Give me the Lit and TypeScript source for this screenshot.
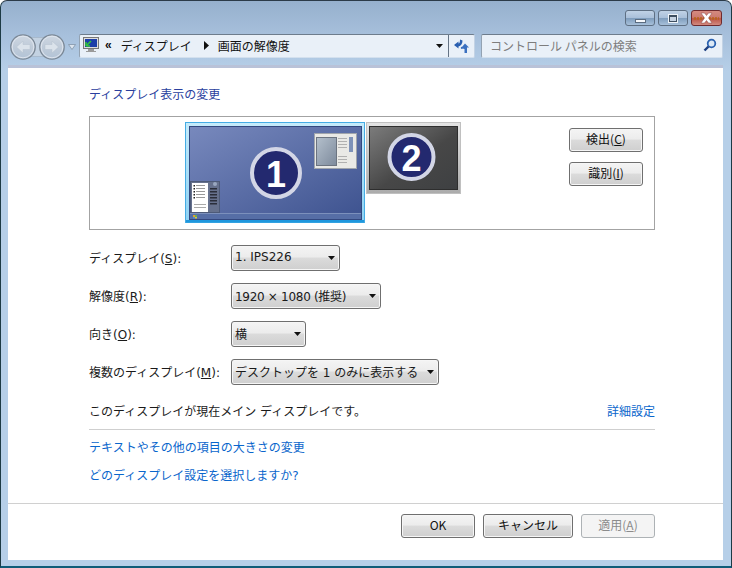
import { LitElement, html, css, svg } from "lit";
import { customElement } from "lit/decorators.js";

const arrow = html`<svg class="caret" width="7" height="4" viewBox="0 0 7 4"><path d="M0 0H7L3.5 4Z" fill="#111"/></svg>`;

const navs = html`<svg class="nav" width="56" height="26" viewBox="0 0 56 26">
  <defs><linearGradient id="ng" x1="0" y1="0" x2="0" y2="1">
    <stop offset="0" stop-color="#cfd8e2"/><stop offset=".5" stop-color="#bfcbd9"/><stop offset="1" stop-color="#b2c3d6"/></linearGradient></defs>
  <path d="M20 3.5H36V22.5H20Z" fill="#c3d2e2" stroke="#a2b3c6" stroke-width=".7"/>
  <circle cx="13" cy="13" r="12.2" fill="url(#ng)" stroke="#7b8896" stroke-width="1.3"/>
  <circle cx="13" cy="13" r="10.8" fill="none" stroke="#e2e8ef" stroke-width=".9"/>
  <path d="M6.5 13 L13 7 V10.5 H20 V15.5 H13 V19Z" fill="#dbe3eb" stroke="#b4c1cf" stroke-width=".5"/>
  <circle cx="42" cy="13" r="12.2" fill="url(#ng)" stroke="#7b8896" stroke-width="1.3"/>
  <circle cx="42" cy="13" r="10.8" fill="none" stroke="#e2e8ef" stroke-width=".9"/>
  <path d="M48.5 13 L42 7 V10.5 H35 V15.5 H42 V19Z" fill="#dbe3eb" stroke="#b4c1cf" stroke-width=".5"/>
</svg>`;

const mon1 = svg`
  <defs>
    <linearGradient id="m1" x1="0" y1="0" x2="1" y2="1"><stop offset="0" stop-color="#7889bd"/><stop offset="1" stop-color="#3d528f"/></linearGradient>
    <linearGradient id="fr" x1="0" y1="0" x2="0" y2="1"><stop offset="0" stop-color="#c5ebfb"/><stop offset="1" stop-color="#8fd2f4"/></linearGradient>
    <linearGradient id="pv" x1="0" y1="0" x2="1" y2="1"><stop offset="0" stop-color="#b4c0cc"/><stop offset="1" stop-color="#7d8a9c"/></linearGradient>
  </defs>
  <rect x=".5" y=".5" width="179" height="100" fill="url(#fr)" stroke="#45ace4"/>
  <rect x="1" y="98" width="178" height="2.5" fill="#1f97dd"/>
  <rect x="4.5" y="4.5" width="172" height="93" fill="url(#m1)" stroke="#33487f"/>
  <rect x="5" y="91" width="171" height="6" fill="#566ea6"/>
  <rect x="5" y="91" width="171" height="1" fill="#7c90bc"/>
  <rect x="8" y="93" width="2" height="2" fill="#e0a030"/><rect x="10" y="93" width="2" height="2" fill="#6cb04c"/><rect x="8" y="95" width="2" height="1.5" fill="#4d8fd0"/><rect x="10" y="95" width="2" height="1.5" fill="#e0c040"/>
  <rect x="129.5" y="11.5" width="42" height="35" fill="#e9e9e6" stroke="#a0a5ac"/>
  <rect x="131.5" y="15.5" width="20" height="28" fill="url(#pv)" stroke="#6c7480"/>
  <rect x="153" y="16" width="9" height="1" fill="#b0b0b0"/><rect x="153" y="19" width="9" height="1" fill="#b0b0b0"/>
  <rect x="153" y="22" width="9" height="1" fill="#b0b0b0"/><rect x="153" y="25" width="9" height="1" fill="#b0b0b0"/>
  <rect x="153" y="34" width="9" height="1" fill="#b0b0b0"/><rect x="153" y="37" width="9" height="1" fill="#b0b0b0"/><rect x="153" y="40" width="9" height="1" fill="#b0b0b0"/>
  <rect x="164" y="15" width="4" height="15" fill="#7e92b8"/>
  <rect x="5.5" y="59.5" width="29" height="31" fill="#66718d" stroke="#4d5a78"/>
  <rect x="7" y="61" width="16" height="29" fill="#fff"/>
  <rect x="8.5" y="63" width="1.5" height="1.5" fill="#222"/><rect x="11" y="63" width="9" height="1" fill="#999"/>
  <rect x="8.5" y="66" width="1.5" height="1.5" fill="#222"/><rect x="11" y="66" width="9" height="1" fill="#999"/>
  <rect x="8.5" y="69" width="1.5" height="1.5" fill="#222"/><rect x="11" y="69" width="9" height="1" fill="#999"/>
  <rect x="8.5" y="72" width="1.5" height="1.5" fill="#222"/><rect x="11" y="72" width="9" height="1" fill="#999"/>
  <rect x="8.5" y="75" width="1.5" height="1.5" fill="#222"/><rect x="11" y="75" width="9" height="1" fill="#999"/>
  <rect x="9" y="82" width="12" height="1" fill="#aaa"/><rect x="9" y="85" width="12" height="1" fill="#aaa"/>
  <rect x="25" y="66" width="7" height="1.5" fill="#2a2e3a"/><rect x="25" y="69" width="7" height="1.5" fill="#2a2e3a"/>
  <rect x="25" y="72" width="7" height="1.5" fill="#2a2e3a"/><rect x="25" y="75" width="7" height="1.5" fill="#2a2e3a"/>
  <rect x="25" y="78" width="7" height="1.5" fill="#2a2e3a"/><rect x="25" y="81" width="7" height="1.5" fill="#2a2e3a"/>
  <circle cx="30" cy="62" r="2" fill="#9aa8c0"/>
  <circle cx="91" cy="51" r="24" fill="#23296f" stroke="#d3d6e6" stroke-width="4"/>
  <text x="91" y="64.5" class="num">1</text>`;

const mon2 = svg`
  <defs>
    <linearGradient id="m2" x1="0" y1="0" x2="1" y2="1"><stop offset="0" stop-color="#7c7c7c"/><stop offset=".55" stop-color="#474747"/><stop offset="1" stop-color="#3e4042"/></linearGradient>
    <linearGradient id="fg" x1="0" y1="0" x2="0" y2="1"><stop offset="0" stop-color="#e4e4e4"/><stop offset="1" stop-color="#ababab"/></linearGradient>
  </defs>
  <rect x=".5" y=".5" width="94" height="71" fill="url(#fg)" stroke="#c0c0c0"/>
  <rect x="3.5" y="4.5" width="88" height="63" fill="url(#m2)" stroke="#2e2e2e"/>
  <circle cx="45.5" cy="35" r="22" fill="#23296f" stroke="#d3d6e6" stroke-width="4"/>
  <text x="45.5" y="48.5" class="num">2</text>`;

@customElement("app-root")
export class AppRoot extends LitElement {
  static styles = css`
    :host {
      display: flex; flex-direction: column; width: 732px; height: 568px; box-sizing: border-box; overflow: hidden;
      font-family: "DejaVu Sans", "Noto Sans CJK JP", sans-serif; font-size: 12px; color: #1a1a1a;
      background: linear-gradient(#96b0cd 0, #a7c0dc 35px, #b6cfe8 70px);
      border: 1px solid #1d3a44; border-top-color: #2b3a48; border-radius: 7px 7px 0 0;
      border-bottom-width: 2px; border-bottom-color: #0f5c78;
    }
    .caption { height: 16px; display: flex; justify-content: flex-end; padding: 9px 9px 0 0; gap: 3px; flex: none; }
    .cbtn {
      width: 30px; height: 16px; box-sizing: border-box; border: 1px solid #5e6f83; border-radius: 3px;
      background: linear-gradient(#c0d2e6 0, #aac0da 48%, #7f9dbd 52%, #a7c0da 100%);
      display: flex; align-items: center; justify-content: center;
    }
    .cbtn.close { width: 31px; border-color: #6e2a2e; background: linear-gradient(#d58a80 0, #cc7b70 45%, #bc5547 55%, #d28a80 100%); }
    .min { width: 9px; height: 2px; border: 1px solid #5b6c80; background: #f4f7fb; margin-top: 5px; }
    .max { width: 6px; height: 4px; border: 1px solid #3e4e60; border-top-width: 2px; background: #c6d3e2; outline: 1px solid #eef3f8; }
    .toolbar { flex: none; height: 24px; margin-top: 8px; display: flex; align-items: stretch; padding: 0 8px 0 9px; }
    .navs { width: 69px; display: flex; align-items: center; flex: none; }
    .nav { margin: 2px 2px 0 0; flex: none; }
    .navdrop { width: 8px; height: 6px; margin-top: 1px; }
    .addr, .search {
      flex: none; box-sizing: border-box; border: 1px solid #7e8ea0; border-color: #6d7c8c #c3d3e5 #d3e0ee #93a2b2;
      border-radius: 2px; background: #e9f0f8; display: flex; align-items: center; padding-bottom: 2px;
    }
    .addr { width: 396px; padding-left: 3px; color: #111; }
    .crumb { font-family: "Noto Sans CJK JP", sans-serif; }
    .chev { font-family: "Liberation Sans", sans-serif; font-weight: 700; margin: 0 9px 0 6px; font-size: 12px; line-height: 1; }
    .tri { margin: 0 9px 0 12px; }
    .spacer { flex: 1; }
    .addr .caret { margin-right: 5px; margin-top: 1px; }
    .refresh { width: 25px; align-self: stretch; margin-bottom: -2px; border-left: 1px solid #647385; display: flex; align-items: center; justify-content: center; }
    .search {
      margin-left: 6px; width: 242px; justify-content: space-between;
      padding-left: 8px; padding-right: 5px; color: #7d7d7d; font-family: "Noto Sans CJK JP", sans-serif;
    }
    .body {
      flex: 1; margin: 7px 8px 6px 7px; background: #fff; border-top: 3px solid #b9c2d8; box-sizing: border-box; display: flex; flex-direction: column; min-height: 0;
    }
    .main { flex: 1; padding: 17px 68px 0 81px; display: flex; flex-direction: column; }
    .ja { font-family: "Noto Sans CJK JP", sans-serif; }
    .heading { color: #2a3f9e; height: 18px; line-height: 18px; }
    .preview {
      margin-top: 13px; height: 114px; box-sizing: border-box; border: 1px solid #a3a3a3; padding: 5px 11px 0 95px;
      display: flex; align-items: flex-start;
    }
    .mons { flex: 1; display: flex; align-items: flex-start; gap: 1px; }
    .num { font: 700 36px "Liberation Sans", sans-serif; fill: #fff; text-anchor: middle; }
    .sidebtns { display: flex; flex-direction: column; gap: 10px; padding-top: 6px; }
    button {
      color: #111; padding: 0 0 2px; box-sizing: border-box; height: 24px; border: 1px solid #6f6f6f; border-radius: 3px;
      background: linear-gradient(#f4f4f4 0, #ececec 46%, #dbdbdb 50%, #cfcfcf 100%);
      box-shadow: inset 0 0 0 1px #f6f6f6;
      font: 12px/1 "Noto Sans CJK JP", sans-serif;
    }
    .sidebtns button { width: 74px; }
    u { text-underline-offset: 1px; }
    .rows { margin-top: 15px; display: flex; flex-direction: column; gap: 12px; }
    .row { display: flex; align-items: center; height: 26px; }
    .lab { width: 142px; flex: none; padding-bottom: 2px; }
    .dd {
      height: 26px; box-sizing: border-box; border: 1px solid #6f6f6f; border-radius: 3px; display: flex; align-items: center; justify-content: space-between;
      padding: 0 4px 0 3px; box-shadow: inset 0 0 0 1px #f6f6f6;
      background: linear-gradient(#f4f4f4 0, #ececec 46%, #dbdbdb 50%, #cfcfcf 100%);
    }
    .dd span { padding-bottom: 2px; }
    .res { letter-spacing: -.3px; }
    .w1 { width: 109px; } .w2 { width: 150px; } .w3 { width: 75px; } .w4 { width: 208px; }
    .info { margin-top: 13px; height: 24px; display: flex; justify-content: space-between; align-items: center; }
    .link { color: #0a66cc; }
    .sep { height: 1px; background: #cfcfcf; margin-top: 7px; }
    .l1 { margin-top: 9px; height: 18px; line-height: 18px; }
    .l2 { margin-top: 10px; height: 18px; line-height: 18px; }
    .footer { flex: none; height: 57px; box-sizing: border-box; border-top: 1px solid #d0d0d0; display: flex; justify-content: flex-end; gap: 8px; padding: 10px 68px 0 0; }
    .footer button { width: 74px; }
    .footer .cancel { width: 90px; }
    .footer button:disabled { background: #f4f4f4; border-color: #adb2b5; color: #8b8b8b; box-shadow: none; }
  `;

  render() {
    return html`
      <div class="caption">
        <div class="cbtn"><div class="min"></div></div>
        <div class="cbtn"><div class="max"></div></div>
        <div class="cbtn close">
          <svg width="27" height="12" viewBox="0 0 27 12">
            <path d="M1 6.5H26" stroke="#b8641e" stroke-width="2.5" stroke-dasharray="2 1"/>
            <path d="M8 1H11.5L13.5 3.5 15.5 1H19L15.5 6 19 11H15.5L13.5 8.5 11.5 11H8L11.5 6Z" fill="#fff" stroke="#8a4a4a" stroke-width=".5"/>
          </svg>
        </div>
      </div>
      <div class="toolbar">
        <div class="navs">
          ${navs}
          <svg class="navdrop" viewBox="0 0 8 6"><path d="M.5 .5H7.5L4 5.5Z" fill="#dbe4ee" stroke="#8194a8" stroke-width=".8"/></svg>
        </div>
        <div class="addr">
          <svg width="16" height="17" viewBox="0 0 16 17">
            <rect x=".5" y=".5" width="15" height="11" fill="#ddd" stroke="#777"/>
            <rect x="2" y="2" width="12" height="8" fill="#1d3fa8"/>
            <path d="M3 9 L8 4 M3 9 H7 M3 9 V5" stroke="#34c23c" stroke-width="1.6" fill="none"/>
            <path d="M5 12H11V14H13V15H3V14H5Z" fill="#9a9a9a"/>
          </svg>
          <span class="chev">&#171;</span>
          <span class="crumb">ディスプレイ</span>
          <svg class="tri" width="5" height="9" viewBox="0 0 5 9"><path d="M0 0L5 4.5 0 9Z" fill="#111"/></svg>
          <span class="crumb">画面の解像度</span>
          <span class="spacer"></span>
          ${arrow}
          <span class="refresh">
            <svg width="15" height="14" viewBox="0 0 15 14">
              <path d="M0 6 L4.5 2.5 V4.5 C5.5 4.5 6 3 6 .5 L8.5 1.5 C8.5 4.5 7 7 4.5 7.5 V9.5Z" fill="#2a5fb0"/>
              <path d="M11 4.5 L15 8.5 H13 V14 H10.5 V10 C9.5 9.5 8.5 9.5 7 10 L6.8 8.3 C8 7.7 9 7.7 9.8 8 L9.3 8.5 H7.5Z" fill="#3a70c0"/>
            </svg>
          </span>
        </div>
        <div class="search">
          <span>コントロール パネルの検索</span>
          <svg width="14" height="14" viewBox="0 0 14 14">
            <circle cx="8.5" cy="5.5" r="3.8" fill="#dce9f6" stroke="#2b62b0" stroke-width="1.8"/>
            <path d="M5.5 8.5 L1.5 12.5" stroke="#1c3f80" stroke-width="2.4"/>
          </svg>
        </div>
      </div>
      <div class="body">
        <div class="main">
          <div class="heading ja">ディスプレイ表示の変更</div>
          <div class="preview">
            <div class="mons">
              <svg width="180" height="101" viewBox="0 0 180 101">${mon1}</svg>
              <svg width="95" height="72" viewBox="0 0 95 72">${mon2}</svg>
            </div>
            <div class="sidebtns">
              <button>検出(<u>C</u>)</button>
              <button>識別(<u>I</u>)</button>
            </div>
          </div>
          <div class="rows">
            <div class="row"><span class="lab">ディスプレイ(<u>S</u>):</span><div class="dd w1"><span>1. IPS226</span>${arrow}</div></div>
            <div class="row"><span class="lab">解像度(<u>R</u>):</span><div class="dd w2"><span class="res">1920 × 1080 (推奨)</span>${arrow}</div></div>
            <div class="row"><span class="lab">向き(<u>O</u>):</span><div class="dd w3"><span>横</span>${arrow}</div></div>
            <div class="row"><span class="lab">複数のディスプレイ(<u>M</u>):</span><div class="dd w4"><span>デスクトップを 1 のみに表示する</span>${arrow}</div></div>
          </div>
          <div class="info"><span>このディスプレイが現在メイン ディスプレイです。</span><span class="link">詳細設定</span></div>
          <div class="sep"></div>
          <div class="l1 link">テキストやその他の項目の大きさの変更</div>
          <div class="l2 link">どのディスプレイ設定を選択しますか?</div>
        </div>
        <div class="footer">
          <button>OK</button>
          <button class="cancel">キャンセル</button>
          <button disabled>適用(<u>A</u>)</button>
        </div>
      </div>
    `;
  }
}
